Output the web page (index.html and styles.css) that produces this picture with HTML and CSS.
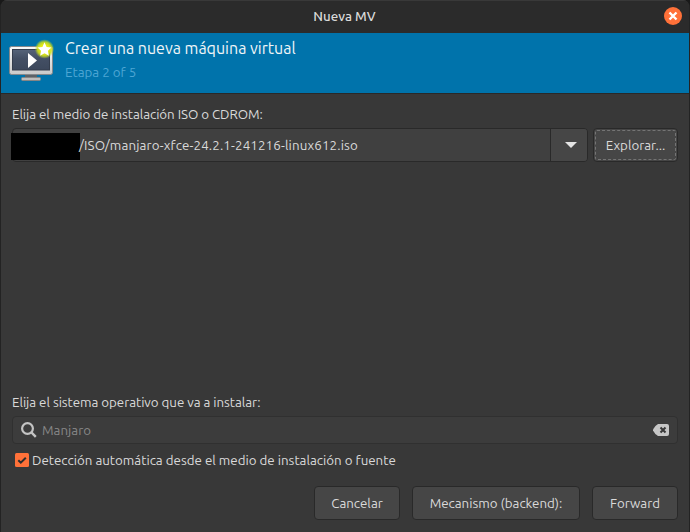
FILE: index.html
```html
<!DOCTYPE html>
<html lang="es">
<head>
<meta charset="utf-8">
<title>Nueva MV</title>
<link rel="stylesheet" href="styles.css">
</head>
<body>
<div class="window">
  <header class="titlebar">
    <h1 class="window-title">Nueva MV</h1>
    <button class="close" aria-label="Cerrar">
      <svg width="18" height="18" viewBox="0 0 18 18"><circle cx="9" cy="9" r="9" fill="#ff7139"/><path d="M5.500 5.500l7 7M12.500 5.500l-7 7" stroke="#fff" stroke-width="2.400"/></svg>
    </button>
  </header>
  <section class="banner">
    <svg class="monitor" width="48" height="48" viewBox="0 0 48 48">
      <defs>
        <linearGradient id="frame" x1="0" y1="0" x2="0" y2="1"><stop offset="0" stop-color="#fafafa"/><stop offset="1" stop-color="#c9c9c9"/></linearGradient>
        <linearGradient id="screen" x1="0" y1="0" x2="0" y2="1"><stop offset="0" stop-color="#56647a"/><stop offset=".45" stop-color="#434f64"/><stop offset="1" stop-color="#3d485c"/></linearGradient>
        <radialGradient id="glow"><stop offset=".45" stop-color="#e6ec16"/><stop offset=".72" stop-color="#cfe018" stop-opacity=".85"/><stop offset="1" stop-color="#b9d82a" stop-opacity="0"/></radialGradient>
      </defs>
      <path d="M17 35h12v4H17z" fill="#5c6268"/>
      <rect x="13.500" y="38.500" width="19" height="3" rx="1" fill="#bdbdbd" stroke="#858585"/>
      <rect x="1.500" y="7.500" width="43" height="28" rx="2" fill="url(#frame)" stroke="#85888b"/>
      <rect x="4.500" y="10.500" width="37" height="20.500" fill="url(#screen)" stroke="#343d4d"/>
      <path d="M20 14v15l9-7.500z" fill="#fff"/>
      <circle cx="36.500" cy="10" r="9.800" fill="url(#glow)"/>
      <path d="M36.500 3.300l2.100 4.600 4.900.5-3.600 3.300 1 5-4.400-2.500-4.400 2.500 1-5-3.600-3.300 4.900-.5z" fill="#fff"/>
    </svg>
    <div class="banner-copy">
      <h2 class="heading">Crear una nueva máquina virtual</h2>
      <p class="step">Etapa 2 of 5</p>
    </div>
  </section>
  <main class="content">
    <label class="caption media-caption">Elija el medio de instalación ISO o CDROM:</label>
    <div class="media-row">
      <div class="combo">
        <div class="path"><span class="redacted"></span><span class="file">/ISO/manjaro-xfce-24.2.1-241216-linux612.iso</span></div>
        <button class="drop" aria-label="Abrir lista"><svg width="12" height="6" viewBox="0 0 12 6"><path d="M0 0h12L6 6z" fill="#e4e4e4"/></svg></button>
      </div>
      <button class="btn browse"><span class="focus">Explorar...</span></button>
    </div>
    <div class="spacer"></div>
    <label class="caption os-caption">Elija el sistema operativo que va a instalar:</label>
    <div class="search">
      <svg width="16" height="16" viewBox="0 0 16 16"><circle cx="6.500" cy="6.500" r="5.400" fill="none" stroke="#c4c4c4" stroke-width="2.200"/><path d="M10.400 10.400l4.400 4.400" stroke="#c4c4c4" stroke-width="2.400"/></svg>
      <span class="query">Manjaro</span>
      <svg width="16" height="12" viewBox="0 0 16 12"><path d="M5 0h9a2 2 0 0 1 2 2v8a2 2 0 0 1-2 2H5Q2 10.500 0 6.500v-1Q2 1.500 5 0z" fill="#c6c6c6"/><path d="M7.500 3.500l5 5M12.500 3.500l-5 5" stroke="#383838" stroke-width="2"/></svg>
    </div>
    <div class="check">
      <svg width="14" height="14" viewBox="0 0 14 14"><rect width="14" height="14" rx="1.500" fill="#ff7139"/><path d="M3.300 7.200l2.500 2.500 5-5" fill="none" stroke="#2d2d2d" stroke-width="2"/></svg>
      <span class="check-label">Detección automática desde el medio de instalación o fuente</span>
    </div>
    <footer class="actions">
      <button class="btn cancel">Cancelar</button>
      <button class="btn backend">Mecanismo (backend):</button>
      <button class="btn forward">Forward</button>
    </footer>
  </main>
</div>
</body>
</html>
```
FILE: styles.css
```css
* { box-sizing: border-box; }
body { margin: 0; background: #191919; font: 13.333px/20px Ubuntu, "Noto Sans", sans-serif; color: #dadada; }
button { font: inherit; color: inherit; padding: 0; margin: 0; }
h1, h2, p { margin: 0; font-weight: 400; }
span { white-space: nowrap; }
svg { display: block; flex: none; }
.window { width: 690px; height: 532px; display: flex; flex-direction: column; background: #383838; border: solid #232323; border-width: 0 1px; border-radius: 7px 7px 0 0; overflow: hidden; }
.titlebar { height: 33px; flex: none; display: grid; grid-template-columns: 40px 1fr 40px; align-items: center; background: #2b2b2b; border-top: 1px solid #393939; }
.window-title { grid-column: 2; text-align: center; font-size: 13.333px; font-weight: 500; line-height: 20px; margin-right: 1px; }
.close { justify-self: end; margin: 0 7px 2px 0; border: 0; background: none; }
.banner { height: 61px; flex: none; display: flex; background: #0073ab; border-bottom: 1px solid #292929; }
.monitor { margin: 6px 0 0 7px; }
.banner-copy { margin: 4px 0 0 9px; color: #f2f6f8; }
.heading { font-size: 16px; line-height: 23px; }
.step { margin-top: 3px; line-height: 20px; color: #4da6d4; }
.content { flex: 1; display: flex; flex-direction: column; padding: 11px 11px 12px; }
.caption { display: block; height: 20px; }
.media-caption { letter-spacing: -.05px; }
.os-caption { letter-spacing: -.04px; }
.media-row { display: flex; gap: 5px; margin-top: 3px; height: 34px; }
.combo { width: 577px; display: flex; border: 1px solid #292929; border-radius: 4px; background: #404040; }
.path { flex: 1; display: flex; align-items: center; }
.redacted { width: 69px; height: 27px; margin: 3px 0 0 -2px; background: #000; }
.file { margin-left: -1px; padding-top: 2px; letter-spacing: .14px; }
.drop { width: 37px; display: flex; align-items: center; justify-content: center; padding-left: 3px; border: 0; border-left: 1px solid #292929; background: #464646; border-radius: 0 3px 3px 0; }
.btn { height: 34px; padding-top: 2px; border: 1px solid #292929; border-radius: 4px; background: #464646; }
.browse { width: 85px; padding: 1px; }
.focus { display: flex; width: 100%; height: 100%; padding-top: 2px; align-items: center; justify-content: center; border: 1px dashed #747474; border-radius: 2px; }
.spacer { flex: 1; }
.search { height: 28px; margin-top: 3px; padding: 0 8px; display: flex; align-items: center; border: 1px solid #303030; border-radius: 4px; background: #3c3c3c; }
.query { flex: 1; margin-left: 5px; padding-top: 2px; color: #878787; }
.check { display: flex; align-items: center; gap: 3px; height: 20px; margin: 6px 0 0 3px; }
.check-label { padding-top: 2px; }
.actions { display: flex; justify-content: flex-end; gap: 12px; margin-top: 16px; }
.cancel { width: 86px; }
.backend { width: 168px; }
.forward { width: 86px; }
```
